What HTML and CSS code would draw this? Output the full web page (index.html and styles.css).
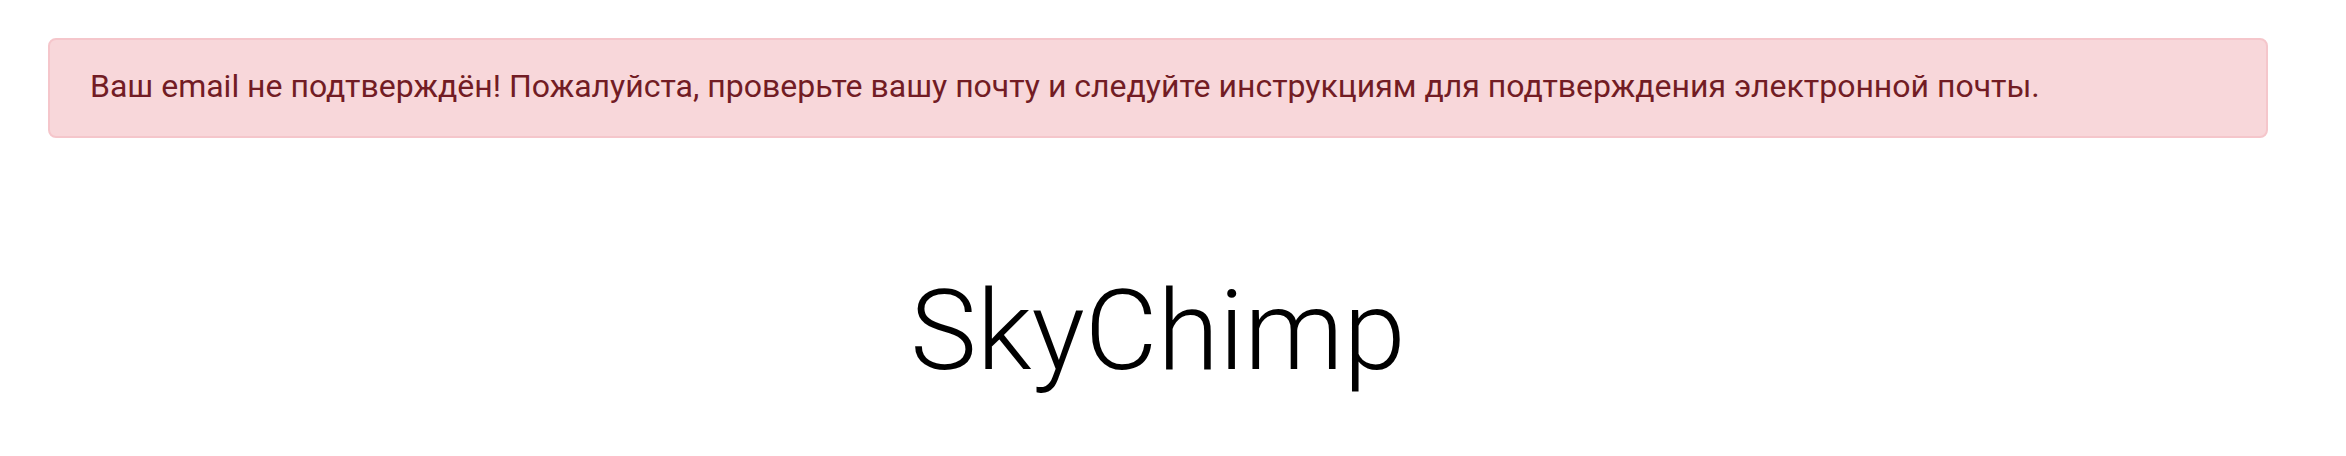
FILE: index.html
```html
<!DOCTYPE html>
<html lang="ru">
<head>
<meta charset="utf-8">
<title>SkyChimp</title>
<link rel="stylesheet" href="styles.css">
</head>
<body>
<div class="page">
  <div class="alert" role="alert">Ваш email не подтверждён! Пожалуйста, проверьте вашу почту и следуйте инструкциям для подтверждения электронной почты.</div>
  <h1 class="brand">SkyChimp</h1>
</div>
</body>
</html>
```

FILE: styles.css
```css
html, body {
  margin: 0;
  padding: 0;
  background: #ffffff;
}

body {
  font-family: Roboto, "Liberation Sans", Arial, sans-serif;
  color: #212529;
}

.page {
  width: 2220px;
  padding: 38px 0 0 48px;
}

.alert {
  box-sizing: border-box;
  width: 100%;
  padding: 22px 40px 26px;
  border: 2px solid #f5c6cb;
  border-radius: 8px;
  background: #f8d7da;
  color: #721c24;
  font-size: 32px;
  line-height: 48px;
}

.brand {
  margin: 126px 0 0;
  text-align: center;
  font-size: 112px;
  font-weight: 300;
  line-height: 1.2;
  color: #000000;
}
```
